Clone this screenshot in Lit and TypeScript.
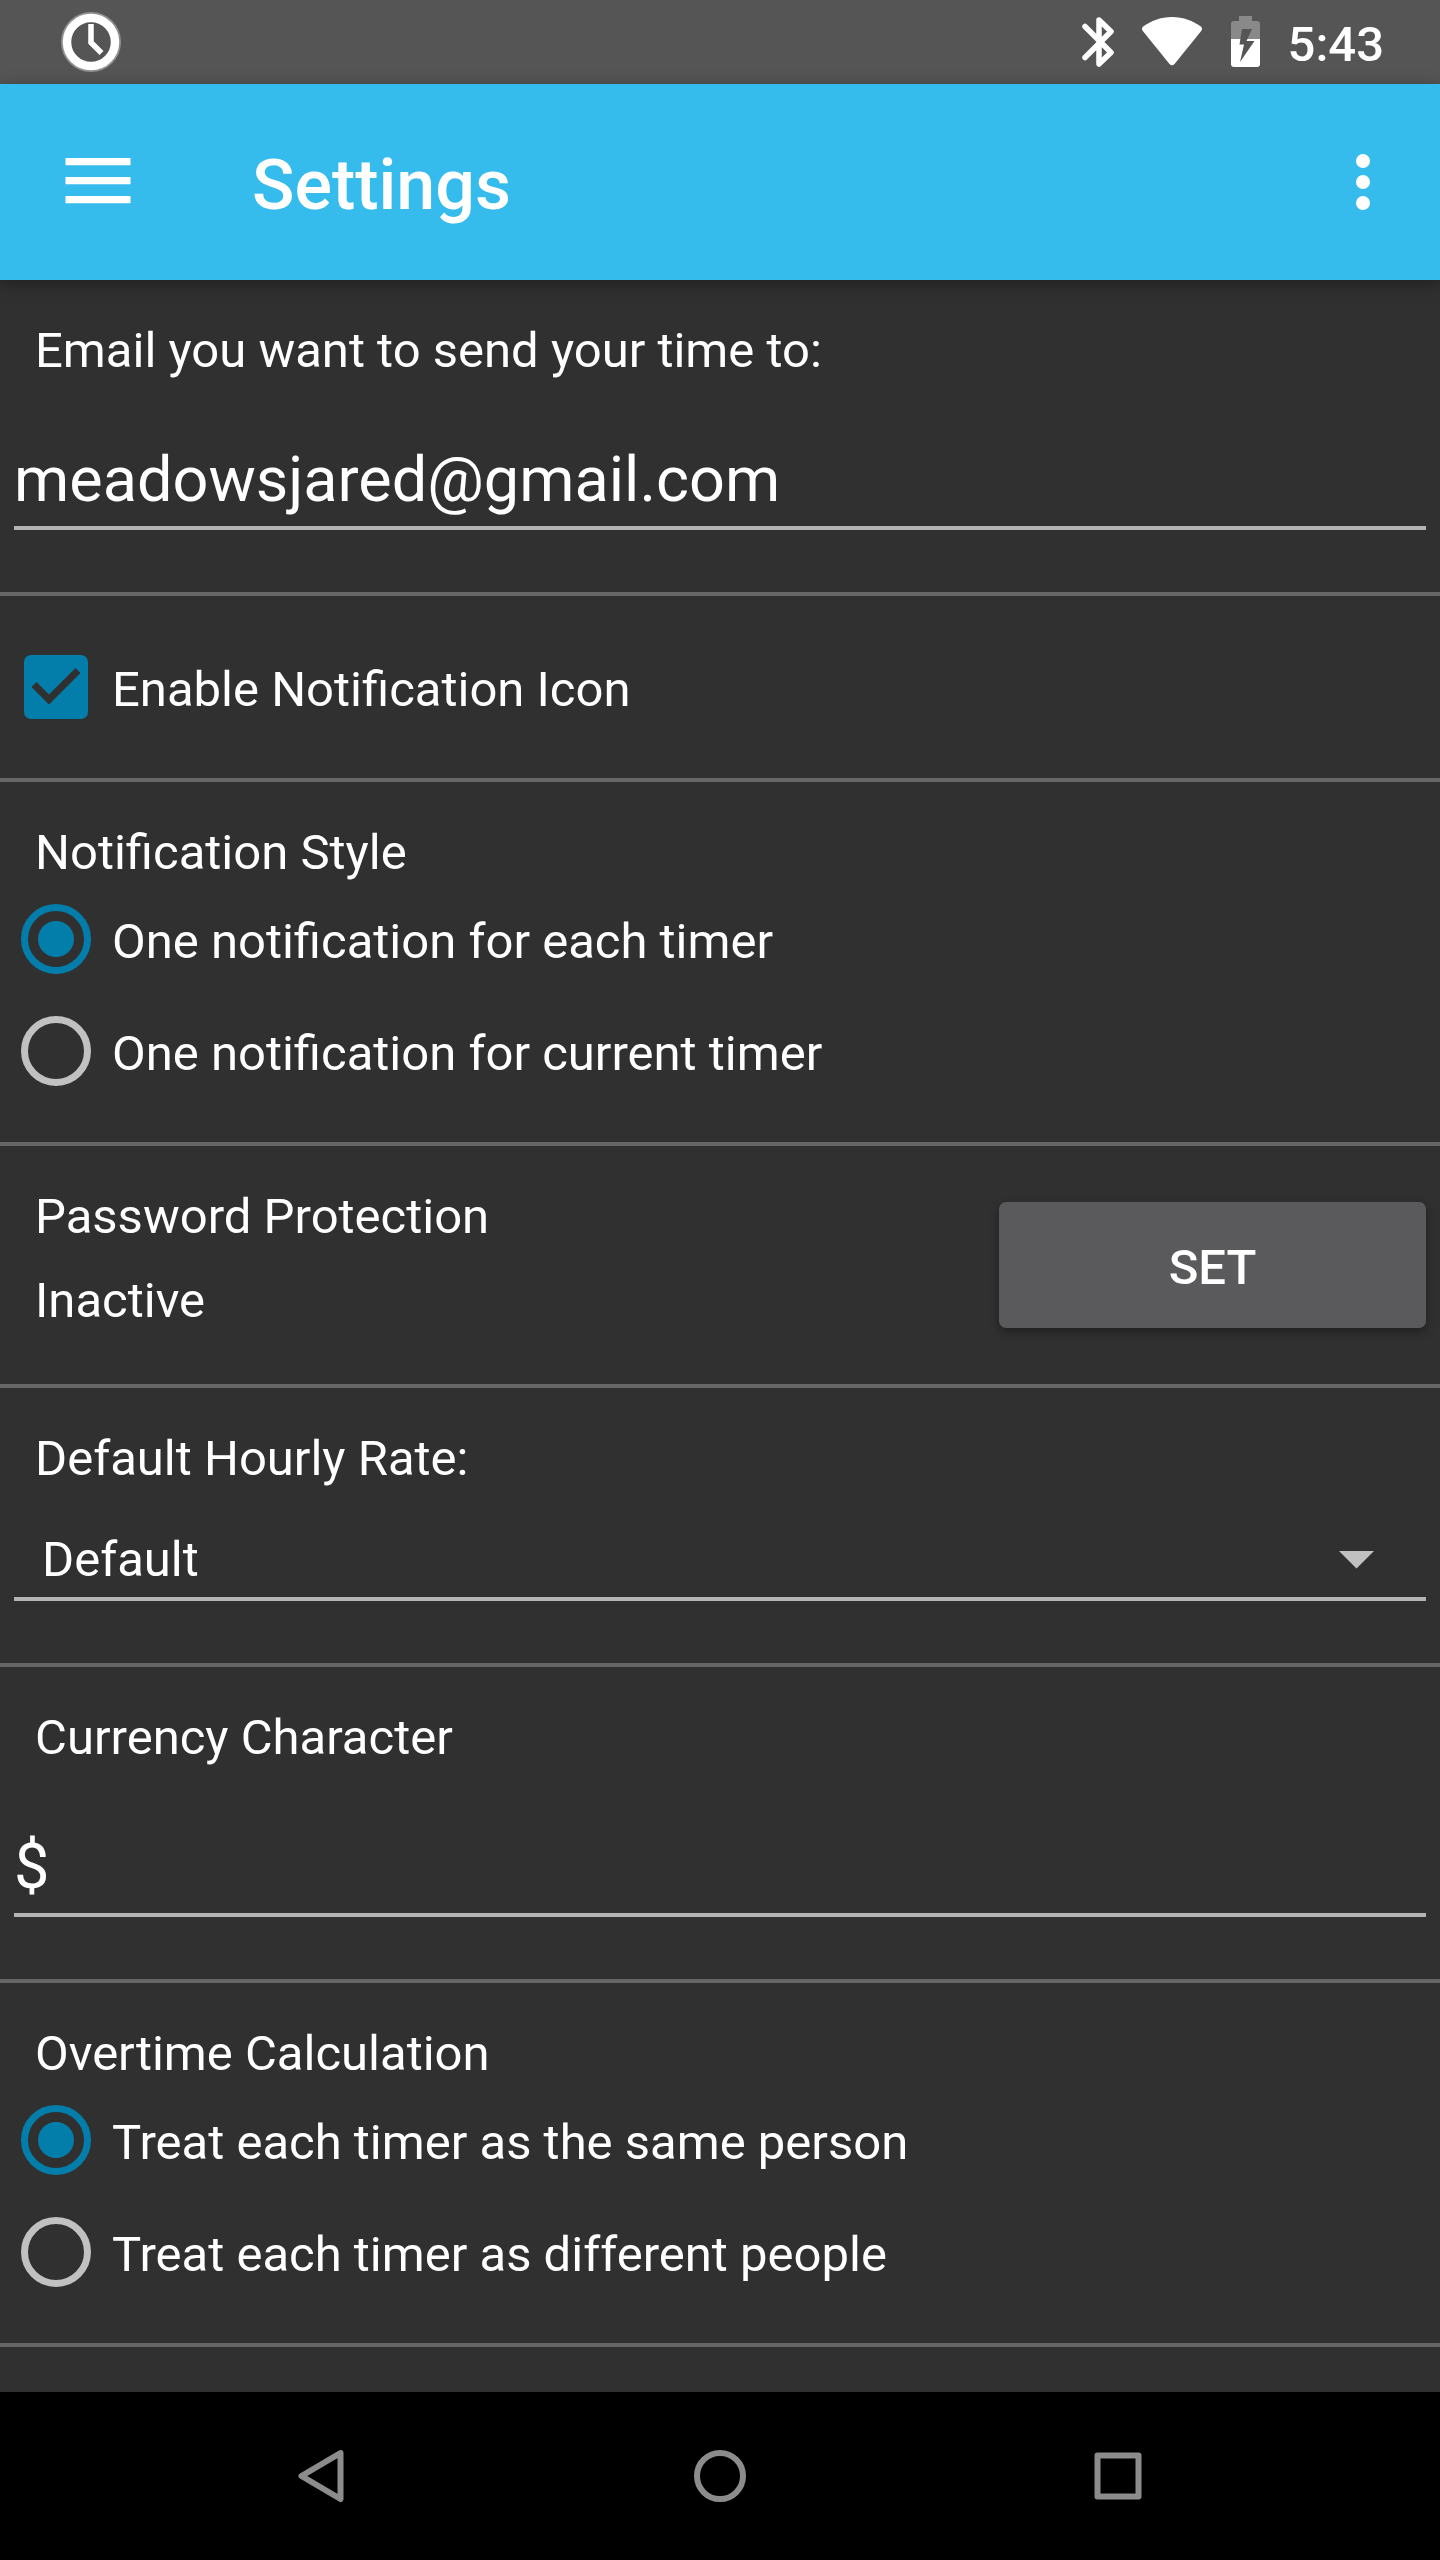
import { LitElement, html, css, svg } from "lit";
import { customElement, property, state } from "lit/decorators.js";

interface Choice {
  value: string;
  label: string;
}

@customElement("status-bar")
export class StatusBar extends LitElement {
  @property() time = "";

  static styles = css`
    :host {
      display: flex;
      align-items: center;
      justify-content: space-between;
      height: 84px;
      padding: 0 56px 0 60px;
      background: #555555;
      color: #ffffff;
    }
    svg {
      display: block;
    }
    .tray {
      display: flex;
      align-items: center;
    }
    .bluetooth {
      margin-right: 27px;
    }
    .wifi {
      margin-right: 29px;
    }
    .battery {
      margin-right: 28px;
    }
    .time {
      font-size: 49px;
      font-weight: 500;
      line-height: 60px;
      padding-top: 6px;
    }
  `;

  render() {
    return html`
      <svg width="62" height="62" viewBox="0 0 62 62" role="img" aria-label="Timer running">
        <circle cx="31" cy="31" r="29" fill="none" stroke="#ffffff" stroke-opacity="0.35" stroke-width="2" />
        <circle cx="31" cy="31" r="24" fill="none" stroke="#ffffff" stroke-width="8.500" />
        <path d="M31 13V31.500L41.500 42" fill="none" stroke="#ffffff" stroke-width="5.500" />
      </svg>
      <div class="tray">
        <svg class="bluetooth" width="34" height="52" viewBox="0 0 34 52" role="img" aria-label="Bluetooth">
          <path
            d="M4 10.500L30 36.500L18 48V4L30 15.500L4 41.500"
            fill="none"
            stroke="#ffffff"
            stroke-width="5.500"
            stroke-linecap="round"
            stroke-linejoin="round"
          />
        </svg>
        <svg class="wifi" width="60" height="52" viewBox="0 0 60 52" role="img" aria-label="Wi-Fi">
          <path
            d="M1.200 10.500C9 5 18.500 1 30 1C41.500 1 51 5 58.800 10.500Q61 12.500 59.200 15L32.500 48Q30 50.500 27.500 48L0.800 15Q-1 12.500 1.200 10.500Z"
            fill="#ffffff"
          />
        </svg>
        <svg class="battery" width="29" height="52" viewBox="0 0 29 52" role="img" aria-label="Battery charging">
          <path
            fill="#898989"
            d="M8 0H21V5H26Q29 5 29 8V23.500H0V8Q0 5 3 5H8Z"
          />
          <path fill="#ffffff" d="M0 23H29V48Q29 51 26 51H3Q0 51 0 48Z" />
          <path fill="#555555" d="M11 13H21L15.500 25H23.500L9 46L13 28.500H8.500Z" />
        </svg>
        <span class="time">${this.time}</span>
      </div>
    `;
  }
}

@customElement("app-bar")
export class AppBar extends LitElement {
  @property() heading = "";

  static styles = css`
    :host {
      display: flex;
      align-items: center;
      position: relative;
      z-index: 1;
      height: 196px;
      background: #36bbed;
      color: #ffffff;
      box-shadow: 0 4px 16px rgba(0, 0, 0, 0.35);
    }
    button {
      display: flex;
      align-items: center;
      justify-content: center;
      width: 196px;
      height: 196px;
      padding: 0;
      border: 0;
      background: none;
      color: inherit;
    }
    .more {
      width: 154px;
    }
    h1 {
      flex: 1;
      margin: 0;
      padding: 6px 0 0 56px;
      font-size: 70px;
      font-weight: 500;
      line-height: 84px;
    }
  `;

  render() {
    return html`
      <button aria-label="Open menu">
        <svg width="84" height="84" viewBox="0 0 84 84">
          <path
            d="M9.500 18H74.500V25.200H9.500ZM9.500 37H74.500V44.200H9.500ZM9.500 56H74.500V63.200H9.500Z"
            fill="currentColor"
          />
        </svg>
      </button>
      <h1>${this.heading}</h1>
      <button class="more" aria-label="More options">
        <svg width="84" height="84" viewBox="0 0 84 84" fill="currentColor">
          <circle cx="42" cy="21" r="7" />
          <circle cx="42" cy="42" r="7" />
          <circle cx="42" cy="63" r="7" />
        </svg>
      </button>
    `;
  }
}

@customElement("nav-bar")
export class NavBar extends LitElement {
  static styles = css`
    :host {
      display: flex;
      height: 168px;
      padding: 0 123px;
      background: #000000;
    }
    button {
      flex: 1;
      display: flex;
      align-items: center;
      justify-content: center;
      padding: 0;
      border: 0;
      background: none;
      color: #8c8c8c;
    }
    svg {
      fill: none;
      stroke: currentColor;
      stroke-width: 6;
      stroke-linejoin: round;
    }
  `;

  private key(label: string, shape: unknown) {
    return html`
      <button aria-label=${label}>
        <svg width="84" height="84" viewBox="0 0 84 84">${shape}</svg>
      </button>
    `;
  }

  render() {
    return html`
      ${this.key("Back", svg`<path d="M60.500 19L21.500 42L60.500 65Z" />`)}
      ${this.key("Home", svg`<circle cx="42" cy="42" r="23" />`)}
      ${this.key("Recent apps", svg`<rect x="21.500" y="21.500" width="41" height="41" />`)}
    `;
  }
}

@customElement("app-root")
export class AppRoot extends LitElement {
  @state() private notificationStyle = "each";
  @state() private overtime = "same";

  private readonly notificationStyles: Choice[] = [
    { value: "each", label: "One notification for each timer" },
    { value: "current", label: "One notification for current timer" },
  ];

  private readonly overtimeModes: Choice[] = [
    { value: "same", label: "Treat each timer as the same person" },
    { value: "different", label: "Treat each timer as different people" },
  ];

  static styles = css`
    :host {
      display: flex;
      flex-direction: column;
      min-height: 100vh;
      background: #303030;
      color: #ffffff;
      font-family: Roboto, sans-serif;
      font-size: 49px;
    }
    * {
      box-sizing: border-box;
    }
    main {
      flex: 1;
    }
    section,
    fieldset {
      min-width: 0;
      margin: 0;
      padding: 35px 0;
      border: 0;
      border-bottom: 4px solid #666666;
    }
    .text {
      display: block;
      padding-top: 6px;
      line-height: 60px;
    }
    .title {
      margin-left: 35px;
    }
    legend {
      float: left;
      width: 100%;
      padding: 0;
    }
    .field {
      display: block;
      width: calc(100% - 28px);
      margin: 0 14px 27px;
      border: 0;
      border-bottom: 4px solid #b4b4b4;
      border-radius: 0;
      outline: 0;
      background: none;
      color: inherit;
      font-family: inherit;
    }
    .entry {
      height: 149px;
      padding: 56px 0 5px;
      font-size: 63px;
      line-height: 84px;
    }
    .picker {
      position: relative;
    }
    .choice {
      height: 112px;
      padding: 41px 28px 7px;
      appearance: none;
      font-size: 49px;
      line-height: 60px;
    }
    .arrow {
      position: absolute;
      top: 62px;
      right: 66px;
      pointer-events: none;
    }
    .option {
      display: flex;
      align-items: center;
      clear: both;
      height: 112px;
    }
    .option input {
      appearance: none;
      flex: none;
      margin: 0;
    }
    .option input[type="radio"] {
      display: grid;
      place-items: center;
      width: 70px;
      height: 70px;
      margin: 0 21px;
      border: 7px solid #c1c1c1;
      border-radius: 50%;
    }
    .option input[type="radio"]:checked {
      border-color: #037eaa;
    }
    .option input[type="radio"]:checked::before {
      content: "";
      width: 36px;
      height: 36px;
      border-radius: 50%;
      background: #037eaa;
    }
    .box {
      display: grid;
      width: 112px;
      height: 112px;
      place-items: center;
    }
    .box > * {
      grid-area: 1 / 1;
    }
    .option input[type="checkbox"] {
      width: 64px;
      height: 64px;
      border: 7px solid #c1c1c1;
      border-radius: 7px;
    }
    .option input[type="checkbox"]:checked {
      border-color: #037eaa;
      background: #037eaa;
    }
    .tick {
      pointer-events: none;
    }
    .password {
      display: grid;
      grid-template-columns: 1fr 427px;
      grid-template-rows: 84px 84px;
      padding-right: 14px;
    }
    .set {
      grid-area: 1 / 2 / 3 / 3;
      align-self: center;
      height: 126px;
      padding: 6px 0 0;
      border: 0;
      border-radius: 7px;
      background: #5a5a5c;
      box-shadow: 0 4px 10px rgba(0, 0, 0, 0.35);
      color: inherit;
      font: 500 49px/60px Roboto, sans-serif;
    }
    .set:hover {
      background: #646466;
    }
  `;

  private radioGroup(
    name: string,
    title: string,
    choices: Choice[],
    current: string,
    pick: (value: string) => void,
  ) {
    return html`
      <fieldset>
        <legend><span class="text title">${title}</span></legend>
        ${choices.map(
          (choice) => html`
            <label class="option">
              <input
                type="radio"
                name=${name}
                value=${choice.value}
                .checked=${choice.value === current}
                @change=${() => pick(choice.value)}
              />
              <span class="text">${choice.label}</span>
            </label>
          `,
        )}
      </fieldset>
    `;
  }

  render() {
    return html`
      <status-bar time="5:43"></status-bar>
      <app-bar heading="Settings"></app-bar>
      <main>
        <section>
          <label class="text title" for="email">Email you want to send your time to:</label>
          <input class="field entry" id="email" type="email" spellcheck="false" value="meadowsjared@gmail.com" />
        </section>

        <section>
          <label class="option">
            <span class="box">
              <input type="checkbox" checked />
              <svg class="tick" width="84" height="84" viewBox="0 0 24 24">
                <path fill="#303030" d="M10 17L5 12L6.410 10.590L10 14.170L17.590 6.580L19 8Z" />
              </svg>
            </span>
            <span class="text">Enable Notification Icon</span>
          </label>
        </section>

        ${this.radioGroup(
          "notification-style",
          "Notification Style",
          this.notificationStyles,
          this.notificationStyle,
          (value) => (this.notificationStyle = value),
        )}

        <section class="password">
          <span class="text title">Password Protection</span>
          <span class="text title">Inactive</span>
          <button class="set">SET</button>
        </section>

        <section>
          <label class="text title" for="rate">Default Hourly Rate:</label>
          <div class="picker">
            <select class="field choice" id="rate">
              <option>Default</option>
            </select>
            <svg class="arrow" width="35" height="18" viewBox="0 0 35 18">
              <path d="M0 0H35L17.500 17.500Z" fill="#c1c1c1" />
            </svg>
          </div>
        </section>

        <section>
          <label class="text title" for="currency">Currency Character</label>
          <input class="field entry" id="currency" type="text" value="$" />
        </section>

        ${this.radioGroup(
          "overtime",
          "Overtime Calculation",
          this.overtimeModes,
          this.overtime,
          (value) => (this.overtime = value),
        )}
      </main>
      <nav-bar></nav-bar>
    `;
  }
}
